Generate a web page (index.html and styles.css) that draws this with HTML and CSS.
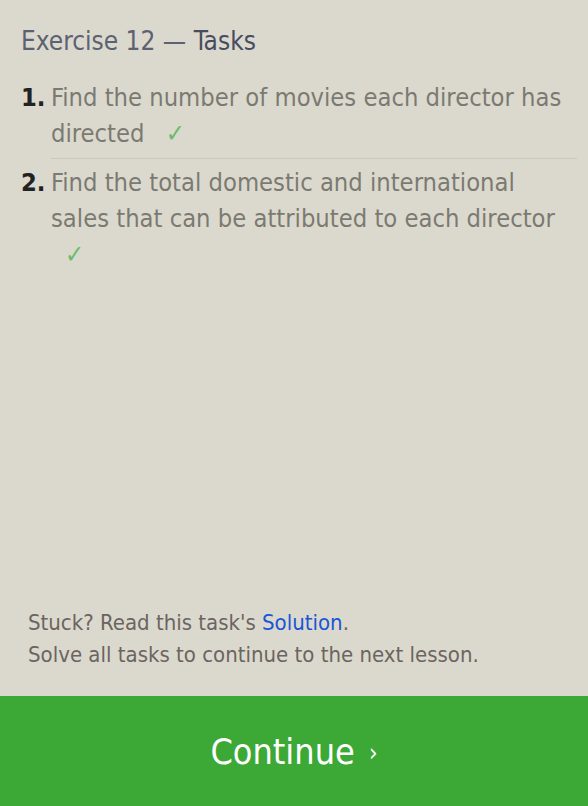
FILE: index.html
```html
<!DOCTYPE html>
<html lang="en">
<head>
    <meta charset="UTF-8">
    <meta name="viewport" content="width=device-width, initial-scale=1.0">
    <title>Exercise 12 - Tasks</title>
    <link rel="stylesheet" href="styles.css">
</head>
<body>

    <div class="page">
        <!-- Task list -->
        <div class="tasks">
            <h2 class="title">Exercise 12 &mdash; <span class="title-strong">Tasks</span></h2>

            <ol class="task-list">
                <li class="task">
                    <span class="task-num">1.</span>
                    <span class="task-text">Find the number of movies each director has directed <span class="check">&#10003;</span></span>
                </li>
                <li class="task">
                    <span class="task-num">2.</span>
                    <span class="task-text">Find the total domestic and international sales that can be attributed to each director <span class="check">&#10003;</span></span>
                </li>
            </ol>
        </div>

        <!-- Hints -->
        <div class="notes">
            <p>Stuck? Read this task's <a href="#" class="solution">Solution</a>.</p>
            <p>Solve all tasks to continue to the next lesson.</p>
        </div>

        <!-- Continue button -->
        <button class="continue" type="button">Continue <span class="arrow">&rsaquo;</span></button>
    </div>

</body>
</html>
```

FILE: styles.css
```css
body {
    margin: 0;
    background-color: #dbd9cd;
    font-family: "DejaVu Sans Condensed", "DejaVu Sans", Tahoma, sans-serif;
}
.page {
    height: 806px;
    display: flex;
    flex-direction: column;
}
.tasks {
    flex: 1;
    padding: 0 11px 0 21px;
}
.title {
    margin: 25px 0 0;
    font-size: 26px;
    font-weight: normal;
    color: #5c6272;
    line-height: 32px;
}
.title-strong {
    color: #474d61;
}
.task-list {
    list-style: none;
    margin: 23px 0 0;
    padding: 0;
}
.task {
    display: flex;
    font-size: 25.3px;
    line-height: 36px;
}
.task + .task {
    margin-top: 6px;
}
.task:first-child .task-text {
    border-bottom: 1px solid #cbc9bd;
    padding-bottom: 6px;
}
.task-num {
    width: 30px;
    flex-shrink: 0;
    font-weight: bold;
    color: #222;
}
.task-text {
    flex: 1;
    color: #7b7a72;
}
.check {
    color: #6cbb6a;
    margin-left: 14px;
}
.notes {
    padding: 0 28px 25px;
    font-size: 22px;
    line-height: 32px;
    color: #6b6461;
}
.notes p {
    margin: 0;
}
.solution {
    color: #1a55d6;
    text-decoration: none;
}
.continue {
    height: 110px;
    border: none;
    background-color: #3ca836;
    color: white;
    font-family: inherit;
    font-size: 35.7px;
    cursor: pointer;
    width: 100%;
}
.arrow {
    font-size: 24px;
    margin-left: 4px;
    vertical-align: 3px;
}
```
